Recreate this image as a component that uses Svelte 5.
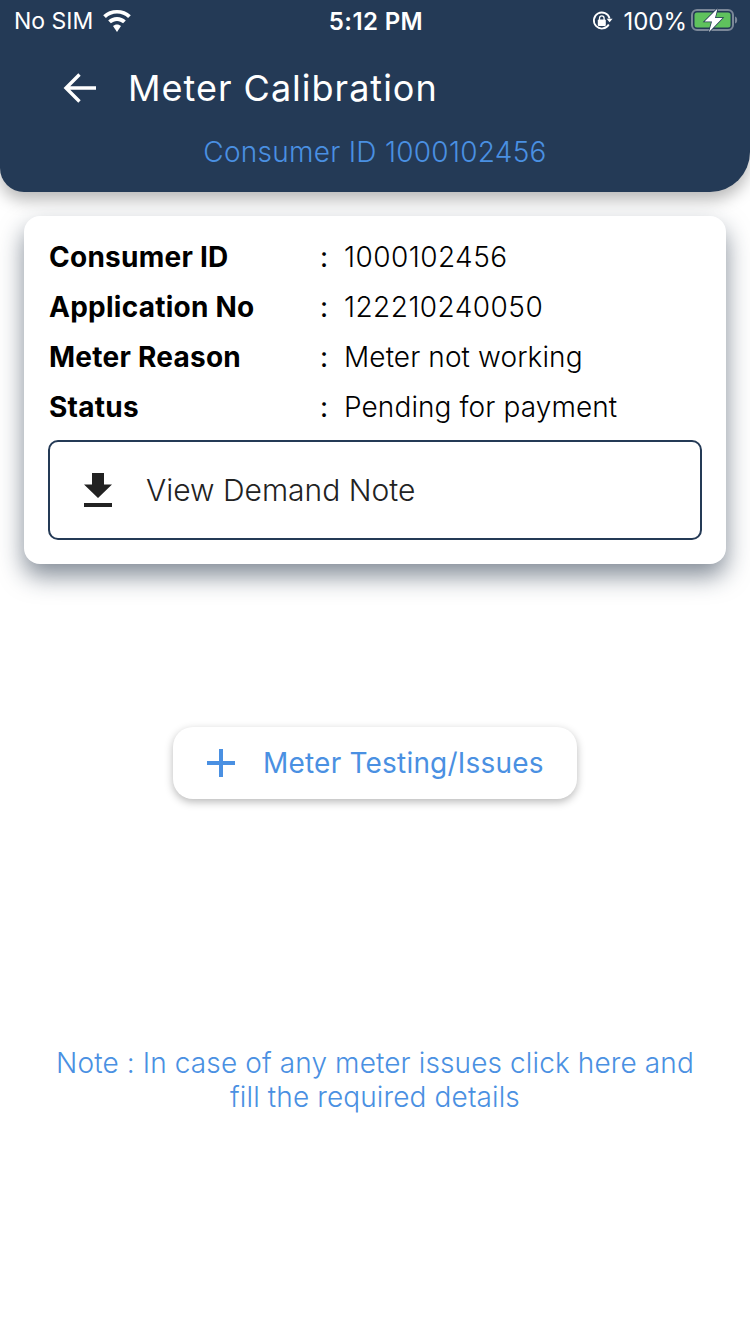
<script>
  const rows = [
    { label: 'Consumer ID', value: '1000102456', num: true },
    { label: 'Application No', value: '122210240050', num: true },
    { label: 'Meter Reason', value: 'Meter not working' },
    { label: 'Status', value: 'Pending for payment' }
  ];
</script>

<div class="page">
  <header class="header">
    <div class="status">
      <div class="status-left">
        <span>No SIM</span>
        <svg class="wifi" width="30" height="22" viewBox="0 0 30 22">
          <path d="M15 3.600c4.300 0 8.200 1.700 11.100 4.500l2.700-2.800C25.200 1.900 20.400 0 15 0S4.800 1.900 1.200 5.300l2.700 2.800C6.800 5.300 10.700 3.600 15 3.600z" fill="#fff"/>
          <path d="M15 10.900c2.400 0 4.500 .9 6.100 2.400l2.700-2.800C21.500 8.300 18.400 7 15 7S8.500 8.300 6.200 10.500l2.700 2.800c1.600-1.500 3.700-2.400 6.100-2.400z" fill="#fff"/>
          <path d="M15 14.400c-1.600 0-2.900.6-4 1.500L15 22l4-6.100c-1.100-.9-2.400-1.500-4-1.500z" fill="#fff"/>
        </svg>
      </div>
      <span class="time">5:12 PM</span>
      <div class="status-right">
        <svg class="lock" width="22" height="22" viewBox="0 0 22 22">
          <path d="M17.800 14.500A8 8 0 1 1 18.600 8.500" fill="none" stroke="#fff" stroke-width="1.800"/>
          <path d="M15.600 8.800h6l-3 3.400z" fill="#fff"/>
          <rect x="6.800" y="9.600" width="8" height="6.400" rx="1" fill="#fff"/>
          <path d="M8.500 10V8.200a2.300 2.300 0 0 1 4.600 0V10" fill="none" stroke="#fff" stroke-width="1.300"/>
        </svg>
        <span>100%</span>
        <svg class="battery" width="47" height="24" viewBox="0 0 47 24">
          <rect x="1" y="2" width="41" height="20" rx="5" fill="none" stroke="#7b8798" stroke-width="2"/>
          <rect x="3.500" y="4.500" width="36" height="15" rx="2.500" fill="#5fc25d"/>
          <path d="M44 8.500c1.500.5 2.200 1.800 2.200 3.500s-.7 3-2.200 3.500z" fill="#7b8798"/>
          <path d="M26.500 .500 13.500 13.500h7.500l-3 10.500 13.500-14h-7.500z" fill="#fff" stroke="#243a56" stroke-width="1.500" paint-order="stroke"/>
        </svg>
      </div>
    </div>
    <div class="title-row">
      <svg class="back" width="36" height="32" viewBox="0 0 36 32">
        <path d="M3 16h30M16.500 2.500 3 16l13.500 13.500" fill="none" stroke="#fff" stroke-width="3.400"/>
      </svg>
      <h1>Meter Calibration</h1>
    </div>
    <p class="subtitle">Consumer ID 1000102456</p>
  </header>

  <section class="card">
    <div class="rows">
      {#each rows as row}
        <div class="row">
          <span class="label">{row.label}</span>
          <span class="colon">:</span>
          <span class="value" class:num={row.num}>{row.value}</span>
        </div>
      {/each}
    </div>
    <div class="demand">
      <svg width="28" height="34" viewBox="0 0 28 34">
        <path d="M8 0h12v11.500h8L14 25 0 11.500h8z" fill="#222"/>
        <rect y="30" width="28" height="4" fill="#222"/>
      </svg>
      <span>View Demand Note</span>
    </div>
  </section>

  <div class="action-wrap">
    <div class="action">
      <svg width="28" height="28" viewBox="0 0 28 28">
        <path d="M14 0v28M0 14h28" stroke="#4a90e2" stroke-width="4"/>
      </svg>
      <span>Meter Testing/Issues</span>
    </div>
  </div>

  <p class="note">Note : In case of any meter issues click here and<br />fill the required details</p>
</div>

<style>
  :global(body) {
    margin: 0;
    background: #fff;
  }
  .page {
    width: 750px;
    height: 1334px;
    overflow: hidden;
    font-family: Inter, "Liberation Sans", sans-serif;
    background: #fff;
  }
  .header {
    height: 192px;
    box-sizing: border-box;
    background: #243a56;
    border-radius: 0 0 40px 24px;
    box-shadow: 0 8px 16px rgba(0, 0, 0, 0.28);
    color: #fff;
  }
  .status {
    height: 42px;
    padding: 0 12px 0 14px;
    display: grid;
    grid-template-columns: 1fr auto 1fr;
    align-items: center;
    font-size: 23px;
  }
  .status-left {
    display: flex;
    align-items: center;
    gap: 9px;
  }
  .time {
    font-size: 24px;
    font-weight: 600;
    letter-spacing: 0.4px;
  }
  .status-right {
    display: flex;
    justify-content: flex-end;
    align-items: center;
    gap: 4px;
    font-size: 24px;
  }
  .lock {
    margin-right: 6px;
  }
  .battery {
    margin-top: -2px;
  }
  .title-row {
    display: flex;
    align-items: center;
    gap: 29px;
    height: 50px;
    margin-top: 21px;
    padding-left: 63px;
  }
  h1 {
    margin: 0;
    font-size: 36px;
    font-weight: 400;
    line-height: 50px;
    letter-spacing: 1px;
  }
  .subtitle {
    margin: 21px 0 0;
    text-align: center;
    color: #4a90e2;
    font-size: 28px;
    font-weight: 350;
    line-height: 36px;
    letter-spacing: 0.27px;
  }
  .card {
    margin: 24px 24px 0;
    height: 348px;
    box-sizing: border-box;
    padding: 16px 24px 24px;
    background: #fff;
    border-radius: 16px;
    box-shadow: 0 12px 24px rgba(30, 45, 65, 0.55);
  }
  .rows {
    margin-bottom: 8px;
  }
  .row {
    display: flex;
    align-items: center;
    height: 50px;
    font-size: 28px;
    color: #000;
  }
  .label {
    width: 271px;
    margin-left: 1px;
    font-weight: 650;
    letter-spacing: 0.25px;
  }
  .colon {
    width: 24px;
  }
  .value {
    font-weight: 350;
    letter-spacing: 0.1px;
  }
  .value.num {
    letter-spacing: 0.45px;
  }
  .demand {
    height: 100px;
    box-sizing: border-box;
    display: flex;
    align-items: center;
    gap: 34px;
    padding-left: 34px;
    border: 2px solid #243a56;
    border-radius: 10px;
    font-size: 30px;
    font-weight: 350;
    letter-spacing: 0;
    color: #222;
  }
  .action-wrap {
    display: flex;
    justify-content: center;
    margin-top: 163px;
  }
  .action {
    width: 404px;
    height: 72px;
    box-sizing: border-box;
    display: flex;
    align-items: center;
    gap: 28px;
    padding-left: 34px;
    background: #fff;
    border-radius: 20px;
    box-shadow: 0 3px 8px rgba(0, 0, 0, 0.28);
    color: #4a90e2;
    font-size: 28px;
    font-weight: 400;
    letter-spacing: 0.2px;
  }
  .note {
    margin: 247px 0 0;
    text-align: center;
    color: #4a90e2;
    font-size: 28px;
    font-weight: 350;
    line-height: 34px;
    letter-spacing: 0.12px;
  }
</style>
